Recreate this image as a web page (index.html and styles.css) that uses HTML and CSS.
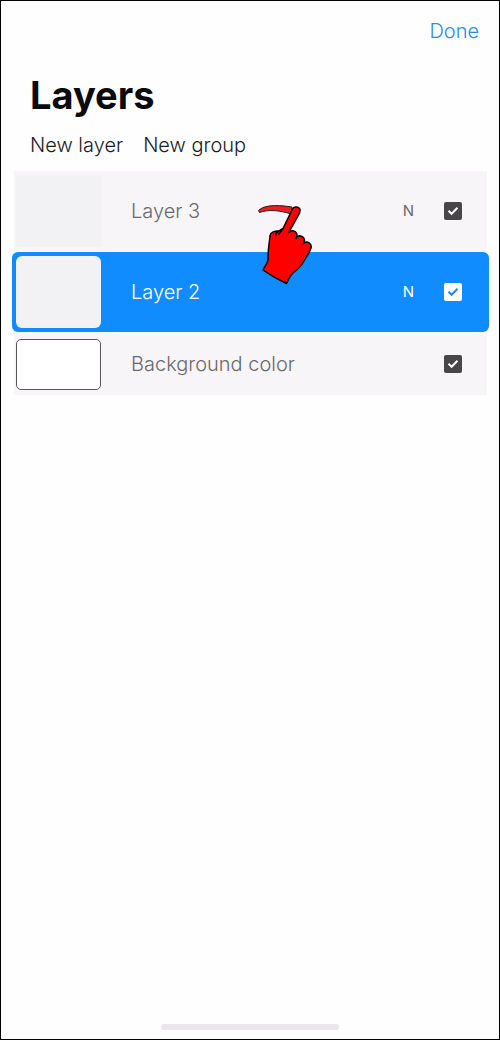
FILE: index.html
```
<!DOCTYPE html>
<html lang="en">
	<head>
		<meta charset="utf-8">
		<meta name="viewport" content="width=device-width, initial-scale=1.0">
		<title>Layers</title>
		<link rel="stylesheet" href="styles.css">
	</head>
	<body>
		<div class="screen">
			<header>
				<button type="button" class="done">Done</button>
			</header>
			<h1>Layers</h1>
			<nav class="actions">
				<button type="button">New layer</button>
				<button type="button">New group</button>
			</nav>
			<ul class="layers">
				<li class="layer">
					<span class="thumb"></span>
					<label class="name" for="layer3">Layer 3</label>
					<span class="mode">N</span>
					<span class="visible">
						<input type="checkbox" id="layer3" checked>
						<svg viewBox="0 0 18 18"><path d="M4.500 8.800L7.600 11.800L13.500 5.800"/></svg>
					</span>
					<!-- drag hint -->
					<svg class="hand" viewBox="0 0 80 110">
						<path class="swipe" d="M13.500 20.500C18 16 28 14 47 17L46 24C34 20 23 19.500 14.500 22.500Z"/>
						<path class="fist" d="M47.500 19C48.500 16 54 16.500 55 19.500C55.500 22 54 24 53 26L43.800 42.500C46.500 39.500 51 40.500 52 44.500C52 45.500 51.800 46.500 51.500 47.500C54 44.500 59 46 59.500 50C59.500 51 59.200 52 59 53C62 50.500 66.500 53 66.200 57C65.500 61 62 66 59 71C56 77 52 80 48 83C45 86 43.500 89 41.500 93.500C34 90 25 85 18 80C20 76 22 74 23 70C22.500 62 24.500 53 25 45.500C25.500 42.500 30 40.500 34 41L38 38.500Z"/>
						<path class="crease" d="M34 41C31.500 42 30.500 44 31 46M38 38.500L33.500 44.500M51.500 47.500L50.500 49M59 53L57.500 54.500"/>
					</svg>
				</li>
				<li class="layer selected">
					<span class="thumb"></span>
					<label class="name" for="layer2">Layer 2</label>
					<span class="mode">N</span>
					<span class="visible">
						<input type="checkbox" id="layer2" checked>
						<svg viewBox="0 0 18 18"><path d="M4.500 8.800L7.600 11.800L13.500 5.800"/></svg>
					</span>
				</li>
				<li class="layer background">
					<span class="thumb"></span>
					<label class="name" for="background">Background color</label>
					<span class="visible">
						<input type="checkbox" id="background" checked>
						<svg viewBox="0 0 18 18"><path d="M4.500 8.800L7.600 11.800L13.500 5.800"/></svg>
					</span>
				</li>
			</ul>
			<div class="home-bar"></div>
		</div>
	</body>
</html>
```

FILE: styles.css
```
*{
	margin: 0;
	padding: 0;
	box-sizing: border-box;
}
body{
	font-family: Inter, "Liberation Sans", sans-serif;
	font-size: 20px;
	font-weight: 300;
	line-height: 24px;
	color: #1c1c1e;
}
button{
	border: 0;
	background: none;
	font: inherit;
	color: inherit;
	cursor: pointer;
}
.screen{
	display: flex;
	flex-direction: column;
	min-height: 100vh;
	border: 1px solid #000;
	background: #fefefe;
}
header{
	display: flex;
	justify-content: flex-end;
	padding: 18px 20px 0;
}
.done{
	color: #2a8cec;
}
h1{
	margin: 28px 29px 0;
	font-size: 38px;
	font-weight: 700;
	line-height: 48px;
	color: #0b0b0d;
}
.actions{
	display: flex;
	gap: 20px;
	margin: 14px 29px 0;
}
.layers{
	display: flex;
	flex-direction: column;
	gap: 1px;
	list-style: none;
	margin: 14px 10px 0 11px;
}
.layer{
	position: relative;
	display: flex;
	align-items: center;
	height: 80px;
	margin: 0 2px;
	padding: 0 25px 0 2px;
	color: #6a696c;
	background: #f7f5f8;
}
.thumb{
	width: 85px;
	height: 72px;
	margin-right: 30px;
	background: #f2f1f3;
}
.name{
	flex: 1;
}
.mode{
	margin-right: 30px;
	font-size: 15px;
	font-weight: 400;
}
.visible{
	display: grid;
	width: 18px;
	height: 18px;
}
.visible input,
.visible svg{
	grid-area: 1 / 1;
	width: 18px;
	height: 18px;
}
.visible input{
	appearance: none;
	border-radius: 2px;
	background: #484649;
}
.visible svg{
	fill: none;
	stroke: #fff;
	stroke-width: 2;
	pointer-events: none;
}
.visible input:not(:checked) + svg{
	display: none;
}
.selected{
	margin: 0;
	padding: 0 27px 0 4px;
	border-radius: 6px;
	color: #fff;
	background: #108cff;
}
.selected .thumb{
	border-radius: 6px;
}
.selected input{
	background: #fff;
}
.selected .visible svg{
	stroke: #2f86e0;
}
.background{
	height: 62px;
}
.background .thumb{
	height: 51px;
	border: 1px solid #58575a;
	border-radius: 5px;
	background: #fff;
}
.hand{
	position: absolute;
	z-index: 1;
	left: 231px;
	top: 19px;
	width: 80px;
	height: 110px;
	pointer-events: none;
}
.hand path{
	fill: #f00;
	stroke: #000;
	stroke-width: 1.5;
	stroke-linejoin: round;
}
.hand .swipe{
	fill: #ed1c24;
	stroke: #222;
	stroke-width: 1;
}
.hand .crease{
	fill: none;
}
.home-bar{
	width: 178px;
	height: 6px;
	margin: auto auto 9px;
	border-radius: 3px;
	background: #e9e7ea;
}
```
